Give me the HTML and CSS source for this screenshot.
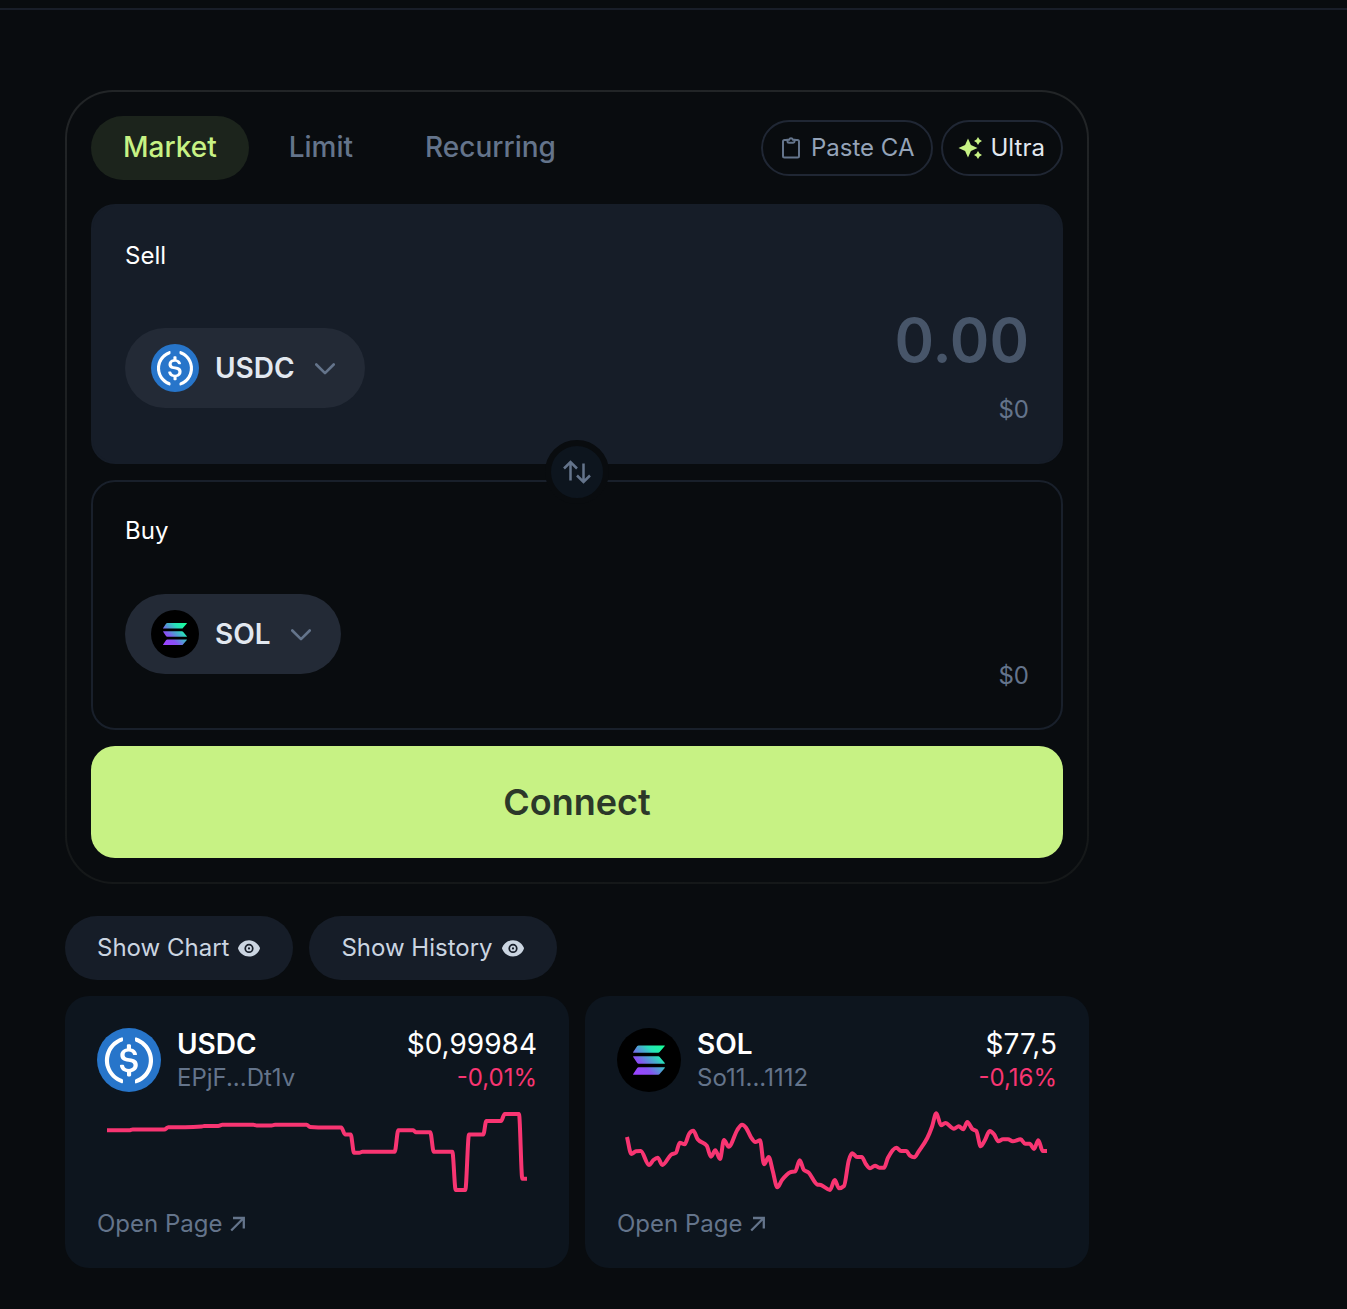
FILE: index.html
```html
<!DOCTYPE html>
<html lang="en">
<head>
<meta charset="utf-8">
<title>Swap</title>
<link rel="stylesheet" href="styles.css">
</head>
<body>
<svg class="defs" aria-hidden="true">
  <defs>
    <linearGradient id="sol-gradient" gradientUnits="userSpaceOnUse" x1="18" y1="46" x2="46" y2="18">
      <stop offset="0.08" stop-color="#9945ff"/>
      <stop offset="0.3" stop-color="#8752f3"/>
      <stop offset="0.5" stop-color="#5497d5"/>
      <stop offset="0.6" stop-color="#43b4ca"/>
      <stop offset="0.72" stop-color="#28e0b9"/>
      <stop offset="0.97" stop-color="#19fb9b"/>
    </linearGradient>
    <symbol id="usdc" viewBox="0 0 2000 2000">
      <circle cx="1000" cy="1000" r="1000" fill="#2775ca"/>
      <path fill="#fff" d="M1275 1158.33c0-145.83-87.5-195.83-262.5-216.66-125-16.67-150-50-150-108.34s41.67-95.83 125-95.83c75 0 116.67 25 137.5 87.5 4.17 12.5 16.67 20.83 29.17 20.83h66.66c16.67 0 29.17-12.5 29.17-29.16v-4.17c-16.67-91.67-91.67-162.5-187.5-170.83v-100c0-16.67-12.5-29.17-33.33-33.34h-62.5c-16.67 0-29.17 12.5-33.34 33.34v95.83c-125 16.67-204.16 100-204.16 204.17 0 137.5 83.33 191.66 258.33 212.5 116.67 20.83 154.17 45.83 154.17 112.5s-58.34 112.5-137.5 112.5c-108.34 0-145.84-45.84-158.34-108.34-4.16-16.66-16.66-25-29.16-25h-70.84c-16.66 0-29.16 12.5-29.16 29.17v4.17c16.66 104.16 83.33 179.16 220.83 200v100c0 16.66 12.5 29.16 33.33 33.33h62.5c16.67 0 29.17-12.5 33.34-33.33v-100c125-20.84 208.33-108.34 208.33-220.84z"/>
      <path fill="#fff" d="M787.5 1595.83c-325-116.66-491.67-479.16-370.83-800 62.5-175 200-308.33 370.83-370.83 16.67-8.33 25-20.83 25-41.67V325c0-16.67-8.33-29.17-25-33.33-4.17 0-12.5 0-16.67 4.16-395.83 125-612.5 545.84-487.5 941.67 75 233.33 254.17 412.5 487.5 487.5 16.67 8.33 33.34 0 37.5-16.67 4.17-4.16 4.17-8.33 4.17-16.66v-58.34c0-12.5-12.5-29.16-25-37.5zM1229.17 295.83c-16.67-8.33-33.34 0-37.5 16.67-4.17 4.17-4.17 8.33-4.17 16.67v58.33c0 16.67 12.5 33.33 25 41.67 325 116.66 491.67 479.16 370.83 800-62.5 175-200 308.33-370.83 370.83-16.67 8.33-25 20.83-25 41.67V1700c0 16.67 8.33 29.17 25 33.33 4.17 0 12.5 0 16.67-4.16 395.83-125 612.5-545.84 487.5-941.67-75-237.5-258.34-416.67-487.5-491.67z"/>
    </symbol>
    <symbol id="sol" viewBox="0 0 64 64">
      <circle cx="32" cy="32" r="32" fill="#000"/>
      <path fill="url(#sol-gradient)" d="M21.6 17.4H47.4q.9 0 .4.7L42.6 24q-.6.7-1.3.7H16.6q-1 0-.4-.8L20.2 18q.6-.6 1.4-.6zM16.6 28.3H41.4q.8 0 1.3.6L47.8 35q.5.7-.4.7H21.6q-.8 0-1.4-.6L16.2 29q-.5-.7.4-.7zM21.6 39.3H47.4q.9 0 .4.7L42.6 46q-.6.7-1.3.7H16.6q-1 0-.4-.8L20.2 39.9q.6-.6 1.4-.6z"/>
    </symbol>
    <symbol id="chevron" viewBox="0 0 20 12">
      <path d="M1.300 1.500l8.700 8.700 8.700-8.700" fill="none" stroke="currentColor" stroke-width="2.600" stroke-linecap="round" stroke-linejoin="round"/>
    </symbol>
    <symbol id="eye" viewBox="0 0 22 17">
      <path fill="currentColor" fill-rule="evenodd" d="M11 .2C6 .2 1.700 3.600.200 7.600a1.800 1.800 0 0 0 0 1.500C1.700 13.200 6 16.600 11 16.600s9.300-3.400 10.800-7.500a1.800 1.800 0 0 0 0-1.500C20.300 3.600 16 .200 11 .200zM11 3.800a4.600 4.600 0 1 1 0 9.200 4.600 4.600 0 0 1 0-9.200z"/>
      <circle cx="11" cy="8.400" r="2" fill="none" stroke="currentColor" stroke-width="1.800"/>
    </symbol>
    <symbol id="arrow-out" viewBox="0 0 16 16">
      <path d="M1.200 14.500L13.700 2M3 2H13.800v10.500" fill="none" stroke="currentColor" stroke-width="2.300"/>
    </symbol>
  </defs>
</svg>

<header class="topbar"></header>
<main class="page">
  <section class="swap">
    <div class="swap-head">
      <nav class="tabs">
        <button class="tab active">Market</button>
        <button class="tab">Limit</button>
        <button class="tab">Recurring</button>
      </nav>
      <div class="tools">
        <button class="tool paste">
          <svg width="20" height="22" viewBox="0 0 20 22" fill="none" stroke="currentColor" stroke-width="2"><path d="M6 3H3.500A1.500 1.500 0 0 0 2 4.500v14.500a1.500 1.500 0 0 0 1.500 1.500h13a1.500 1.500 0 0 0 1.500-1.500V4.500A1.500 1.500 0 0 0 16.500 3H14"/><path d="M6.500 2.700h1.600a2 2 0 0 1 3.800 0h1.600v1.500a1.500 1.500 0 0 1-1.500 1.500H8a1.500 1.500 0 0 1-1.500-1.500z"/></svg>
          <span>Paste CA</span>
        </button>
        <button class="tool ultra">
          <svg width="24" height="22" viewBox="0 0 24 22" fill="#c7f284"><path d="M9 1.500l2.900 6.600 6.600 2.900-6.600 2.900L9 20.500l-2.900-6.600L-.5 11l6.600-2.900zM19 0l1.500 2.500L23 4l-2.500 1.500L19 8l-1.500-2.500L15 4l2.500-1.500zM19 14l1.500 2.500L23 18l-2.500 1.500L19 22l-1.500-2.500L15 18l2.500-1.500z"/></svg>
          <span>Ultra</span>
        </button>
      </div>
    </div>

    <div class="panel sell">
      <div class="panel-label">Sell</div>
      <div class="panel-row">
        <button class="token"><svg class="coin"><use href="#usdc"/></svg><span>USDC</span><svg class="chev"><use href="#chevron"/></svg></button>
        <div class="amounts"><div class="amount">0.00</div><div class="fiat">$0</div></div>
      </div>
      <button class="flip" aria-label="Switch direction">
        <svg width="28" height="24" viewBox="0 0 28 24" fill="none" stroke="currentColor" stroke-width="2.500"><path d="M7.500 20.500V3M1 8.500l6.500-6.500L14 8.500M20.500 3.500V21M14 15.500l6.500 6.500 6.500-6.500"/></svg>
      </button>
    </div>

    <div class="panel buy">
      <div class="panel-label">Buy</div>
      <div class="panel-row">
        <button class="token"><svg class="coin"><use href="#sol"/></svg><span>SOL</span><svg class="chev"><use href="#chevron"/></svg></button>
        <div class="amounts"><div class="fiat">$0</div></div>
      </div>
    </div>

    <button class="connect">Connect</button>
  </section>

  <div class="toggles">
    <button class="toggle"><span>Show Chart</span><svg class="eye"><use href="#eye"/></svg></button>
    <button class="toggle"><span>Show History</span><svg class="eye"><use href="#eye"/></svg></button>
  </div>

  <section class="cards">
    <article class="card">
      <div class="card-head">
        <svg class="logo"><use href="#usdc"/></svg>
        <div class="names"><div class="symbol">USDC</div><div class="address">EPjF...Dt1v</div></div>
        <div class="prices"><div class="price">$0,99984</div><div class="change">-0,01%</div></div>
      </div>
      <svg class="spark" viewBox="0 0 440 100"><path data-points="10,30.3 32.3,30.3 35.7,29.500 67.3,29.500 71.3,27.300 88,27.300 104.700,26.600 107.300,25.900 121.300,25.900 125.300,24.800 156.300,24.800 159.700,25.400 174.700,25.400 178,24.800 209.700,24.800 213,27 229.700,27.500 244.300,27.500 248,34.400 253.700,34.400 257,52.700 262.300,52.700 265.500,51.700 297.700,51.700 301.300,30.300 316.300,30.300 318.700,32.300 333.300,32.300 336.700,51.700 355.300,51.700 358.700,90 368.300,90 372,34.400 386.300,34.400 389.300,21 404,21 407.700,14 422,14 425.300,78.800 430,78.800"/></svg>
      <a class="open" href="#"><span>Open Page</span><svg class="out"><use href="#arrow-out"/></svg></a>
    </article>
    <article class="card">
      <div class="card-head">
        <svg class="logo"><use href="#sol"/></svg>
        <div class="names"><div class="symbol">SOL</div><div class="address">So11...1112</div></div>
        <div class="prices"><div class="price">$77,5</div><div class="change">-0,16%</div></div>
      </div>
      <svg class="spark" viewBox="0 0 440 100"><path data-points="10,37 14.300,54 19,51.300 23.700,51 32,65 36.500,60 40.700,57.700 45.300,65 54,54.700 59,52.700 62.700,42.700 67.700,44.300 72,34 76.300,30.700 80.700,39.300 89.700,45.700 94,56.700 98.300,50.300 103,59 107,40 111.700,46.700 120.300,30 125,24.700 129,27.700 134,37.300 138.300,42 143,40.300 147,64.300 151.700,57 155.700,70.700 160.300,87.300 165,80 173,72.300 178.300,71.300 182.700,60.300 186.700,69.700 191.700,72.700 200,84.300 204.700,85.300 213,90 217.700,80 222,88.300 227,86 231.700,60.700 235.300,53.300 240,57 244.700,57 249,64.300 253,68.300 258,65.700 262.300,67.700 267,67.700 271,57.700 279.300,47.700 284,51 289.300,51 293,55.700 297.300,57.300 301.700,51.300 310.300,38 315,26.700 319.300,13.300 324,25.300 328.300,23 337,28.700 341.700,26.300 346.300,29.300 350.300,22 355.300,29 359.300,31 363.700,46.300 368,40 372.700,31 377,34.300 381.300,41.300 386,39.300 391,39.300 395.700,41.300 403.700,39.300 408,43.700 412.700,43.700 417,49 421.300,40.300 425.700,51 430,51"/></svg>
      <a class="open" href="#"><span>Open Page</span><svg class="out"><use href="#arrow-out"/></svg></a>
    </article>
  </section>
</main>
<script src="sparkline.js"></script>
</body>
</html>
```
FILE: styles.css
```css
* { box-sizing: border-box; }

body {
  margin: 0;
  min-height: 1309px;
  background: #090c0f;
  color: #fff;
  font-family: Inter, sans-serif;
  font-size: 24px;
  line-height: 32px;
}

button {
  margin: 0;
  padding: 0;
  border: 0;
  background: none;
  color: inherit;
  font: inherit;
}

svg { display: block; flex: none; }

.defs { position: absolute; width: 0; height: 0; }

.topbar { height: 10px; border-bottom: 2px solid #191e29; }

.page {
  width: 1024px;
  margin: 80px 0 0 65px;
  display: flex;
  flex-direction: column;
}

.swap {
  padding: 24px;
  border: 2px solid transparent;
  border-radius: 48px;
  background:
    linear-gradient(#090c0f, #090c0f) padding-box,
    linear-gradient(#222527, #151819) border-box;
}

.swap-head {
  display: flex;
  align-items: center;
  justify-content: space-between;
  margin-bottom: 24px;
}

.tabs, .tools { display: flex; gap: 8px; }

.tab {
  height: 64px;
  padding: 0 32px 2px;
  border-radius: 32px;
  color: #64748b;
  font-size: 28px;
  font-weight: 500;
}

.tab.active { background: #1c241c; color: #c7f284; }

.tool {
  height: 56px;
  display: flex;
  align-items: center;
  border: 2px solid #202734;
  border-radius: 28px;
}

.tool span { padding-bottom: 1px; }
.paste { width: 172px; padding-left: 18px; gap: 10px; color: #94a3b8; }
.paste svg { color: #64748b; }
.ultra { width: 122px; padding-left: 16px; gap: 7.5px; color: #e2e8f0; }
.ultra svg { overflow: visible; }

.panel {
  position: relative;
  padding: 34px 32px 30px;
  border: 2px solid #161d28;
  border-radius: 24px;
}

.sell { height: 260px; background: #161d28; }
.buy { height: 250px; margin-top: 16px; padding-top: 33px; border-color: #19202b; }

.panel-row {
  display: flex;
  align-items: center;
  justify-content: space-between;
}

.sell .panel-row { height: 128px; margin-top: 32px; }
.buy .panel-row { height: 112px; margin-top: 31px; }

.token {
  height: 80px;
  padding: 0 30px 0 26px;
  display: flex;
  align-items: center;
  border-radius: 40px;
  background: #232a36;
  color: #e2e8f0;
  font-size: 28px;
  font-weight: 600;
}

.coin { width: 48px; height: 48px; margin-right: 16px; }
.chev { width: 20px; height: 12px; margin: 2px 0 0 20px; color: #64748b; }

.amounts {
  display: flex;
  flex-direction: column;
  align-items: flex-end;
  color: #64748b;
}

.sell .amounts { margin-bottom: 10px; }

.amount {
  color: #475569;
  font-size: 60px;
  font-weight: 600;
  line-height: 80px;
}

.sell .fiat { margin-top: 14px; }
.buy .fiat { margin-top: 84px; }

.flip {
  position: absolute;
  left: 50%;
  top: 234px;
  width: 64px;
  height: 64px;
  transform: translateX(-50%);
  display: flex;
  align-items: center;
  justify-content: center;
  border: 6px solid #090c0f;
  border-radius: 50%;
  background: #0d151e;
  color: #64748b;
  z-index: 1;
}

.connect {
  width: 100%;
  height: 112px;
  margin-top: 16px;
  border-radius: 24px;
  background: #c7f284;
  color: #2b3829;
  font-size: 36px;
  font-weight: 600;
}

.toggles { display: flex; gap: 16px; margin-top: 32px; }

.toggle {
  height: 64px;
  padding: 0 33px 0 32px;
  display: flex;
  align-items: center;
  gap: 9px;
  border-radius: 32px;
  background: #161d28;
  color: #cbd5e1;
}

.toggle span { padding-bottom: 1px; }
.eye { width: 22px; height: 17px; margin-top: 1px; }

.cards {
  display: grid;
  grid-template-columns: 1fr 1fr;
  gap: 16px;
  margin-top: 16px;
}

.card {
  height: 272px;
  padding: 32px;
  border-radius: 24px;
  background: #0d151e;
}

.card-head { display: flex; align-items: flex-start; gap: 16px; }
.logo { width: 64px; height: 64px; }
.names { flex: 1; }
.symbol { font-size: 28px; font-weight: 600; line-height: 32px; }
.address { color: #64748b; line-height: 36px; }
.prices { text-align: right; }
.price { font-size: 28px; line-height: 32px; }
.change { color: #f83572; line-height: 36px; }

.spark {
  width: 440px;
  height: 100px;
  margin-top: 4px;
  fill: none;
  stroke: #f83572;
  stroke-width: 4;
}

.open {
  display: flex;
  align-items: center;
  gap: 8px;
  margin-top: 8px;
  color: #64748b;
  text-decoration: none;
}

.out { width: 16px; height: 16px; }
```
FILE: sparkline.js
```js
// Draws each sparkline as a monotone cubic curve through its data points.
document.querySelectorAll('.spark path').forEach((path) => {
  const p = path.dataset.points.split(' ').map((s) => s.split(',').map(Number));
  const n = p.length;
  const slope = (i) => (p[i + 1][1] - p[i][1]) / (p[i + 1][0] - p[i][0]);
  const tangents = p.map((_, i) => {
    if (i === 0) return slope(0);
    if (i === n - 1) return 0;
    const a = slope(i - 1);
    const b = slope(i);
    if (a * b <= 0) return 0;
    const mean = (a + b) / 2;
    return Math.sign(a) * Math.min(Math.abs(mean), 2 * Math.abs(a), 2 * Math.abs(b));
  });
  let d = `M${p[0]}`;
  for (let i = 0; i < n - 1; i++) {
    const h = (p[i + 1][0] - p[i][0]) / 3;
    d += `C${p[i][0] + h},${p[i][1] + tangents[i] * h} ${p[i + 1][0] - h},${p[i + 1][1] - tangents[i + 1] * h} ${p[i + 1]}`;
  }
  path.setAttribute('d', d);
});
```
